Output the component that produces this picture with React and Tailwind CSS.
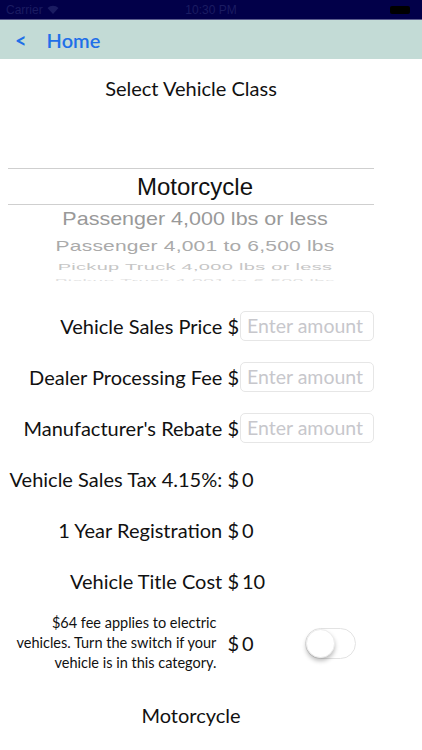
import React from 'react';

const avenir = { fontFamily: 'Lato, "Noto Sans", sans-serif' };

function StatusBar() {
  return (
    <div className="relative h-[20px] bg-[#020049] border-b border-[#5a5c8c] flex items-center px-[6px] text-[12px] text-[#1b1c62]" style={{ fontFamily: '"Liberation Sans", sans-serif' }}>
      <span>Carrier</span>
      <svg className="ml-[4px]" width="12" height="9" viewBox="0 0 12 9">
        <path d="M6 9 L0.5 3 A8 8 0 0 1 11.5 3 Z" fill="#1b1c62" />
      </svg>
      <span className="absolute left-1/2 -translate-x-1/2">10:30 PM</span>
      <div className="ml-auto mr-[6px] w-[20px] h-[8px] rounded-[2px] bg-black"></div>
    </div>
  );
}

function NavBar() {
  return (
    <div className="h-[39px] bg-[#c3dbd6] flex items-center text-[#1f6fe8] font-semibold" style={avenir}>
      <span className="ml-[15px] text-[20px] font-bold">&lt;</span>
      <span className="ml-[20px] text-[20px]">Home</span>
    </div>
  );
}

function Picker() {
  return (
    <div className="h-[164px] overflow-hidden flex flex-col" style={{ fontFamily: '"Liberation Sans", Arial, sans-serif' }}>
      <div className="h-[51px] shrink-0"></div>
      <div className="shrink-0 mx-[8px] w-[366px] h-[37px] border-y border-[#cfcfcf] flex items-center justify-center pl-[8px] text-[24px] text-[#111]">
        Motorcycle
      </div>
      <div className="shrink-0 w-[390px] h-[28px] flex items-center justify-center text-[21.5px] text-[#999] scale-y-[0.87]">
        Passenger 4,000 lbs or less
      </div>
      <div className="shrink-0 w-[390px] h-[26px] flex items-center justify-center text-[21px] text-[#aaa] scale-y-[0.72] tracking-[0.2px]">
        Passenger 4,001 to 6,500 lbs
      </div>
      <div className="shrink-0 w-[390px] h-[16px] flex items-center justify-center text-[20px] text-[#c6c6c6] scale-y-[0.45] tracking-[0.3px]">
        Pickup Truck 4,000 lbs or less
      </div>
      <div className="shrink-0 w-[390px] h-[12px] flex items-center justify-center text-[19px] text-[#e0e0e0] scale-y-[0.3] tracking-[0.5px]">
        Pickup Truck 4,001 to 6,500 lbs
      </div>
    </div>
  );
}

function InputRow({ label }) {
  return (
    <div className="h-[51px] grid grid-cols-[239px_1fr] items-center">
      <div className="text-right text-[20px] text-[#111]">{label} $</div>
      <div className="pl-[1px]">
        <div className="w-[134px] h-[30px] border border-[#e6e6e6] rounded-[5px] flex items-center pl-[6px] text-[19.5px] text-[#c7c7cc]">
          Enter amount
        </div>
      </div>
    </div>
  );
}

function TextRow({ label, value }) {
  return (
    <div className="h-[51px] grid grid-cols-[239px_1fr] items-center text-[20px] text-[#111]">
      <div className="text-right">{label} $</div>
      <div className="pl-[3px]">{value}</div>
    </div>
  );
}

export default function App() {
  return (
    <div className="w-[422px] h-[750px] overflow-hidden bg-white" style={avenir}>
      <StatusBar />
      <NavBar />
      <div className="h-[58px] flex items-center justify-center pr-[40px] text-[20px] text-[#111]">
        Select Vehicle Class
      </div>
      <Picker />
      <div className="h-[19px]"></div>
      <InputRow label="Vehicle Sales Price" />
      <InputRow label="Dealer Processing Fee" />
      <InputRow label="Manufacturer's Rebate" />
      <TextRow label="Vehicle Sales Tax 4.15%:" value="0" />
      <TextRow label="1 Year Registration" value="0" />
      <TextRow label="Vehicle Title Cost" value="10" />
      <div className="h-[74px] grid grid-cols-[239px_1fr] items-center text-[#111]">
        <div className="flex items-center justify-end">
          <div className="text-right text-[14.5px] leading-[20px] mr-[11px]">
            $64 fee applies to electric<br />
            vehicles. Turn the switch if your<br />
            vehicle is in this category.
          </div>
          <span className="text-[20px]">$</span>
        </div>
        <div className="flex items-center">
          <span className="pl-[3px] text-[20px]">0</span>
          <div className="ml-[51px] w-[51px] h-[31px] rounded-full border border-[#e3e3e3] bg-white relative">
            <div className="absolute left-0 top-0 w-[29px] h-[29px] rounded-full bg-white shadow-[0_3px_4px_rgba(0,0,0,0.25)] border border-[#ececec]"></div>
          </div>
        </div>
      </div>
      <div className="h-[70px] flex items-center justify-center pr-[40px] text-[20px] text-[#111]">
        Motorcycle
      </div>
    </div>
  );
}
